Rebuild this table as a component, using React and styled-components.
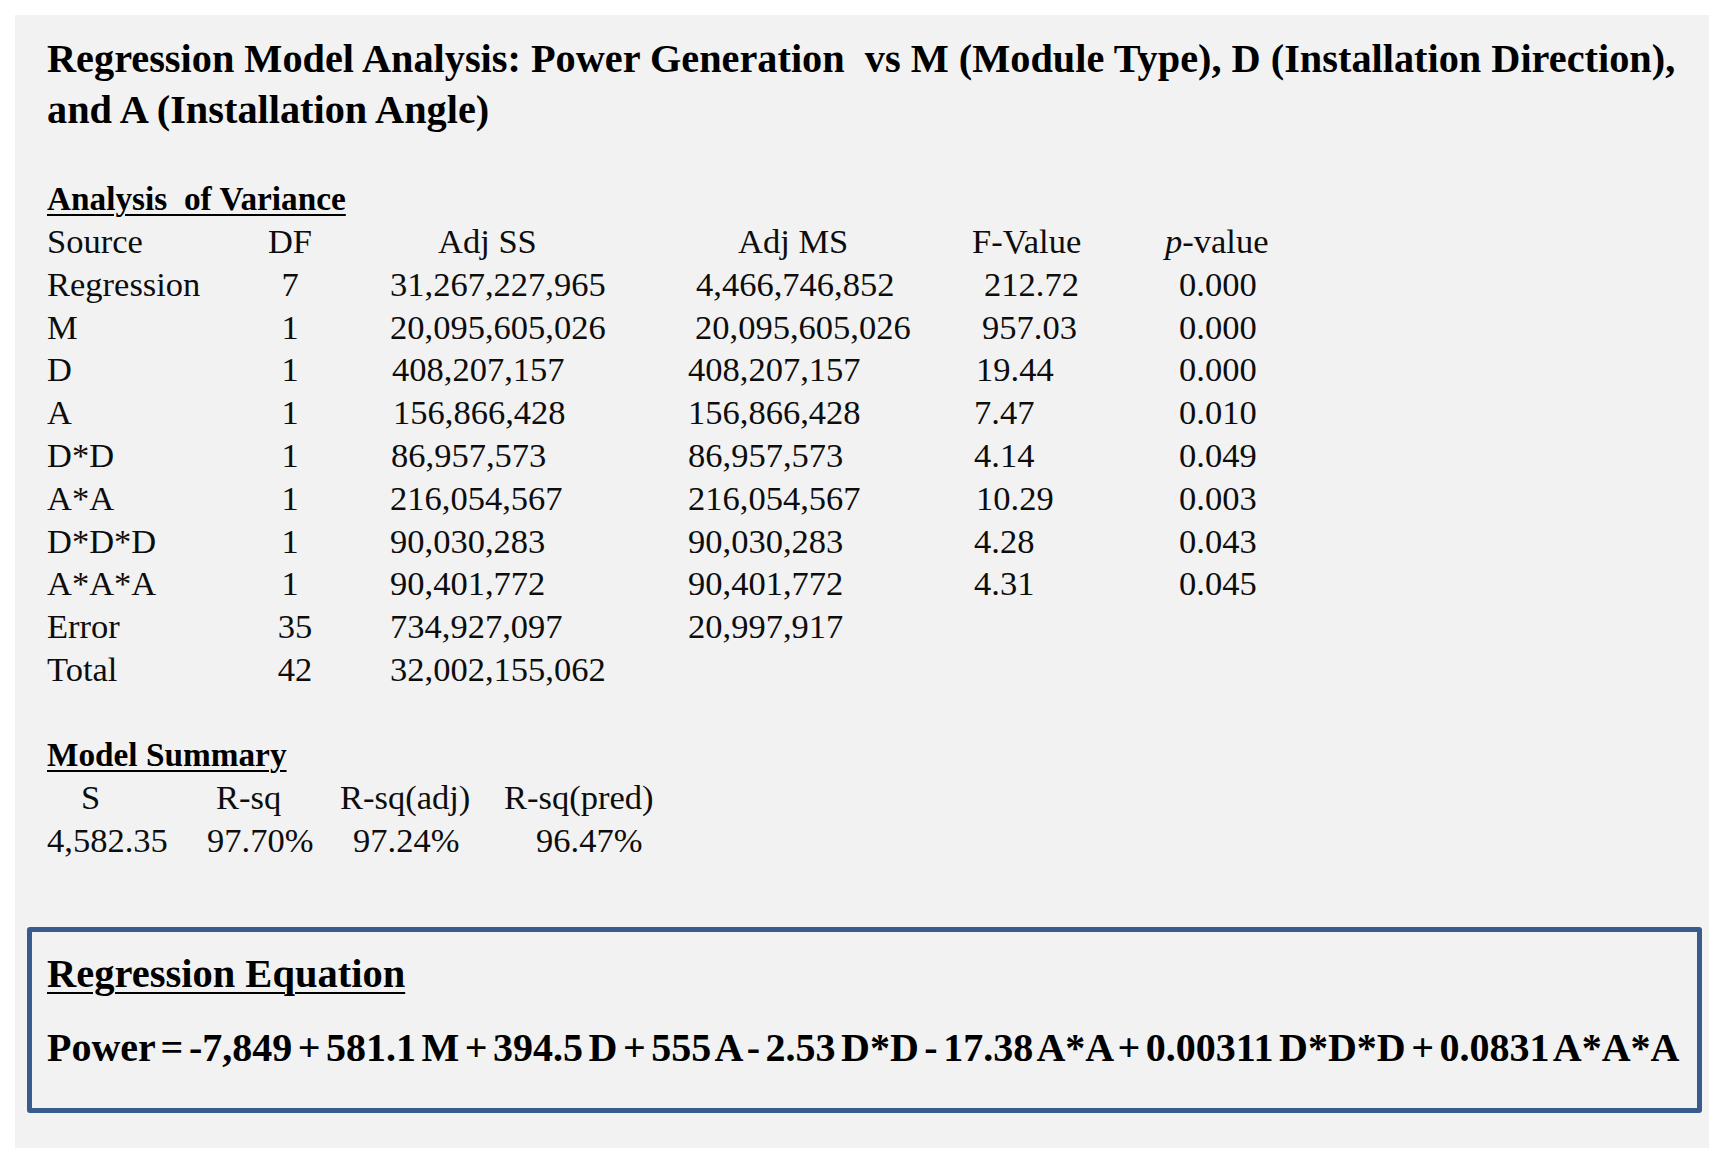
import React from 'react';
import styled, { createGlobalStyle } from 'styled-components';

const GlobalStyle = createGlobalStyle`
    html, body {
        margin: 0;
        padding: 0;
        background: #ffffff;
    }
    body {
        font-family: 'Liberation Serif', 'Times New Roman', serif;
        color: #0d0d0d;
    }
`

const Panel = styled.div`
    margin: 15px 23px 13px 15px;
    background: #f2f2f2;
    padding: 18px 7px 35px 12px;
`

const Report = styled.div`
    padding-left: 20px;
`

const Title = styled.h1`
    margin: 0 0 42px 0;
    font-size: 40.3px;
    font-weight: 700;
    line-height: 51px;
    color: #000;
    white-space: pre-wrap;
`

const SectionHeading = styled.h2`
    margin: 0;
    font-size: 33.3px;
    font-weight: 700;
    line-height: 43px;
    color: #000;
    white-space: pre;
    text-decoration: underline;
    text-decoration-thickness: 2px;
    text-underline-offset: 4px;
`

const AnovaGrid = styled.div`
    display: grid;
    grid-template-columns: 200px 143px 298px 284px 193px auto;
    font-size: 34.5px;
    line-height: 42.8px;
    margin-bottom: 42px;
`

const Cell = styled.div`
    padding-left: ${p => p.$indent || 0}px;
    white-space: nowrap;
`

const DfCell = styled.div`
    text-align: center;
    padding-right: ${p => p.$shift || 57}px;
`

const SummaryGrid = styled.div`
    display: grid;
    grid-template-columns: 160px 133px 164px auto;
    font-size: 34.5px;
    line-height: 42.8px;
`

const EquationBox = styled.div`
    margin-top: 66px;
    border: 5px solid #385b8b;
    border-radius: 3px;
    padding: 18px 20px 36px 15px;
`

const BoxHeading = styled.h2`
    margin: 0 0 26px 0;
    font-size: 40.5px;
    font-weight: 700;
    line-height: 48px;
    color: #000;
    text-decoration: underline;
    text-decoration-thickness: 2px;
    text-underline-offset: 5px;
`

const Equation = styled.p`
    margin: 0;
    font-size: 40px;
    font-weight: 700;
    line-height: 48px;
    color: #000;
    word-spacing: -4.5px;
    white-space: nowrap;
`

const rows = [
    { src: 'Regression', df: '7', ss: '31,267,227,965', ms: '4,466,746,852', msIn: 8, f: '212.72', fIn: 12, p: '0.000' },
    { src: 'M', df: '1', ss: '20,095,605,026', ms: '20,095,605,026', msIn: 7, f: '957.03', fIn: 10, p: '0.000' },
    { src: 'D', df: '1', ss: '408,207,157', ssIn: 2, ms: '408,207,157', f: '19.44', fIn: 4, p: '0.000' },
    { src: 'A', df: '1', ss: '156,866,428', ssIn: 3, ms: '156,866,428', f: '7.47', fIn: 2, p: '0.010' },
    { src: 'D*D', df: '1', ss: '86,957,573', ssIn: 1, ms: '86,957,573', f: '4.14', fIn: 2, p: '0.049' },
    { src: 'A*A', df: '1', ss: '216,054,567', ms: '216,054,567', f: '10.29', fIn: 4, p: '0.003' },
    { src: 'D*D*D', df: '1', ss: '90,030,283', ms: '90,030,283', msIn: -2, f: '4.28', fIn: 2, p: '0.043' },
    { src: 'A*A*A', df: '1', ss: '90,401,772', ms: '90,401,772', msIn: -2, f: '4.31', fIn: 2, p: '0.045' },
    { src: 'Error', df: '35', dfShift: 47, ss: '734,927,097', ms: '20,997,917', msIn: -3 },
    { src: 'Total', df: '42', dfShift: 47, ss: '32,002,155,062' },
]

function App() {
    return (
        <>
            <GlobalStyle />
            <Panel>
                <Report>
                    <Title>
                        {'Regression Model Analysis: Power Generation  vs M (Module Type), D (Installation Direction),'}
                        <br />
                        and A (Installation Angle)
                    </Title>

                    <SectionHeading>{'Analysis  of Variance'}</SectionHeading>
                    <AnovaGrid>
                        <Cell>Source</Cell>
                        <DfCell>DF</DfCell>
                        <Cell $indent={48}>Adj SS</Cell>
                        <Cell $indent={50}>Adj MS</Cell>
                        <Cell>F-Value</Cell>
                        <Cell><i>p</i>-value</Cell>
                        {rows.map(r => (
                            <React.Fragment key={r.src}>
                                <Cell>{r.src}</Cell>
                                <DfCell $shift={r.dfShift}>{r.df}</DfCell>
                                <Cell $indent={r.ssIn}>{r.ss}</Cell>
                                <Cell $indent={r.msIn}>{r.ms || ''}</Cell>
                                <Cell $indent={r.fIn}>{r.f || ''}</Cell>
                                <Cell $indent={14}>{r.p || ''}</Cell>
                            </React.Fragment>
                        ))}
                    </AnovaGrid>

                    <SectionHeading>Model Summary</SectionHeading>
                    <SummaryGrid>
                        <Cell $indent={34}>S</Cell>
                        <Cell $indent={9}>R-sq</Cell>
                        <Cell>R-sq(adj)</Cell>
                        <Cell>R-sq(pred)</Cell>
                        <Cell>4,582.35</Cell>
                        <Cell>97.70%</Cell>
                        <Cell $indent={13}>97.24%</Cell>
                        <Cell $indent={32}>96.47%</Cell>
                    </SummaryGrid>
                </Report>

                <EquationBox>
                    <BoxHeading>Regression Equation</BoxHeading>
                    <Equation>
                        Power = -7,849 + 581.1 M + 394.5 D + 555 A - 2.53 D*D - 17.38 A*A + 0.00311 D*D*D + 0.0831 A*A*A
                    </Equation>
                </EquationBox>
            </Panel>
        </>
    );
}

export default App;
